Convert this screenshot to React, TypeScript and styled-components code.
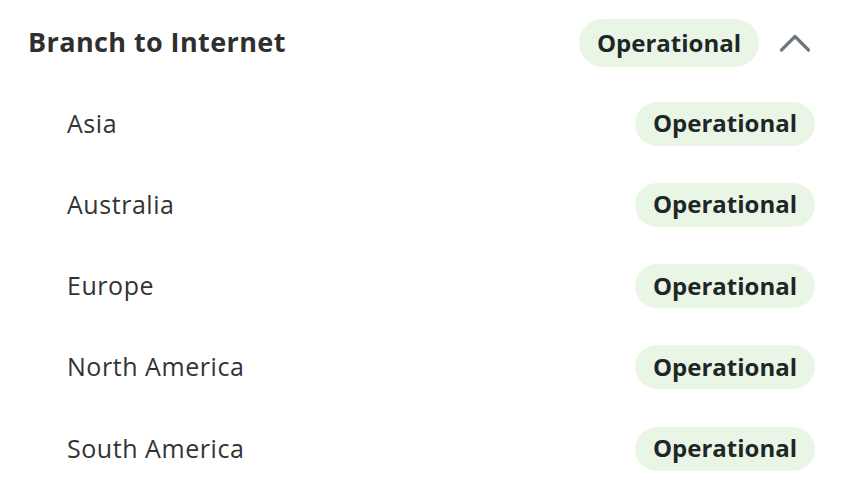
import React from "react";
import styled, { createGlobalStyle } from "styled-components";

const Global = createGlobalStyle`
  html, body { margin: 0; padding: 0; background: #ffffff; }
  body { font-family: "Open Sans", "Lato", sans-serif; }
`;

const Panel = styled.section`
  width: 848px;
  box-sizing: border-box;
  padding: 0 33px 0 28px;
`;

const Header = styled.div`
  display: flex;
  align-items: center;
  height: 48px;
  padding: 19px 0 16px;
`;

const Title = styled.h2`
  flex: 1;
  margin: 0 0 3px;
  font-size: 27px;
  font-weight: 700;
  letter-spacing: 0.4px;
  color: #2f2f2f;
`;

const Badge = styled.span<{ $size: "lg" | "md" }>`
  display: inline-flex;
  align-items: center;
  justify-content: center;
  box-sizing: border-box;
  width: 180px;
  height: ${(p) => (p.$size === "lg" ? 48 : 44)}px;
  padding-bottom: 2px;
  border-radius: 24px;
  background: #e9f6e6;
  color: #1e2726;
  font-size: 24px;
  font-weight: 700;
`;

const Toggle = styled.button`
  display: flex;
  align-items: center;
  justify-content: center;
  width: 40px;
  height: 40px;
  margin-left: 16px;
  padding: 0;
  border: none;
  background: transparent;
  cursor: pointer;
`;

const List = styled.ul`
  list-style: none;
  margin: 0;
  padding: 0 0 0 39px;
`;

const Row = styled.li`
  display: flex;
  align-items: center;
  justify-content: space-between;
  height: 81.25px;
`;

const Label = styled.span`
  margin-bottom: 2px;
  font-size: 25px;
  font-weight: 400;
  letter-spacing: 0.55px;
  color: #333333;
`;

const regions = ["Asia", "Australia", "Europe", "North America", "South America"];

export default function App() {
  return (
    <>
      <Global />
      <Panel>
        <Header>
          <Title>Branch to Internet</Title>
          <Badge $size="lg">Operational</Badge>
          <Toggle aria-label="Collapse">
            <svg width="32" height="20" viewBox="0 0 32 20" fill="none">
              <path d="M2.5 17 L16 3.5 L29.5 17" stroke="#6f7780" strokeWidth="3.2" strokeLinecap="round" strokeLinejoin="round" />
            </svg>
          </Toggle>
        </Header>
        <List>
          {regions.map((r) => (
            <Row key={r}>
              <Label>{r}</Label>
              <Badge $size="md">Operational</Badge>
            </Row>
          ))}
        </List>
      </Panel>
    </>
  );
}
